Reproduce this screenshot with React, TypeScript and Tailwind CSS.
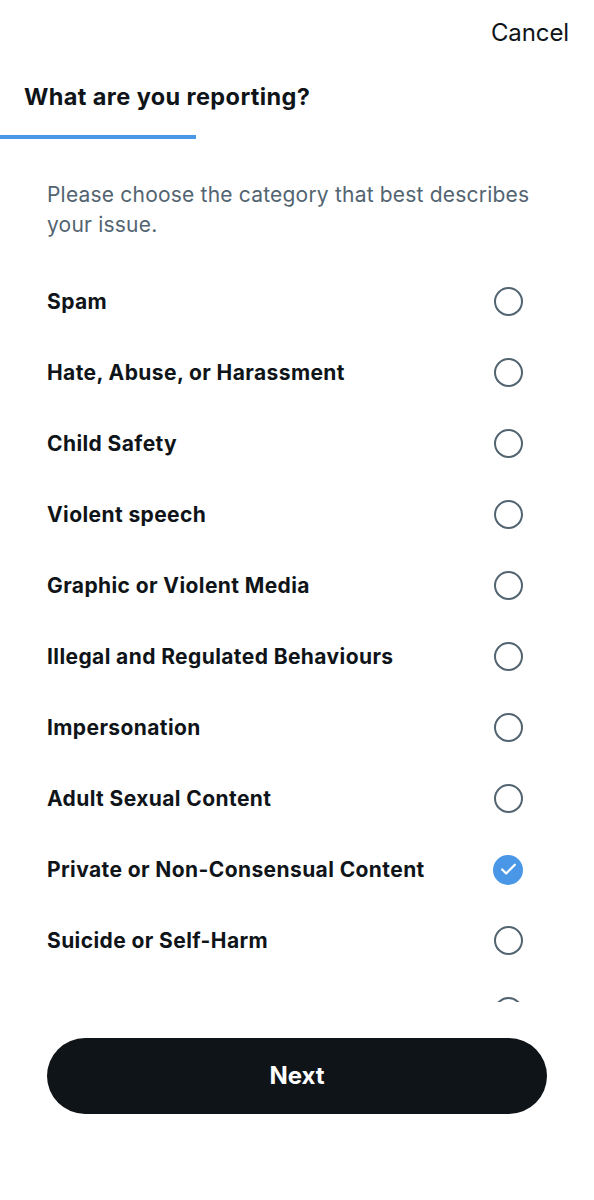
import { Check } from "lucide-react";

const options = [
  "Spam",
  "Hate, Abuse, or Harassment",
  "Child Safety",
  "Violent speech",
  "Graphic or Violent Media",
  "Illegal and Regulated Behaviours",
  "Impersonation",
  "Adult Sexual Content",
  "Private or Non-Consensual Content",
  "Suicide or Self-Harm",
  "Unsolicited Content and Interaction",
];

const selected = "Private or Non-Consensual Content";

function Radio({ checked }: { checked: boolean }) {
  if (checked) {
    return (
      <span className="flex h-[30px] w-[30px] items-center justify-center rounded-full bg-[#4a97e8]">
        <Check className="h-[19px] w-[19px] text-white" strokeWidth={2.8} />
      </span>
    );
  }
  return <span className="block h-[29px] w-[29px] rounded-full border-[2.5px] border-[#536471]" />;
}

export default function App() {
  return (
    <div
      className="flex h-[1200px] w-[594px] flex-col bg-white text-[#0f1419]"
      style={{ fontFamily: "Inter, 'Noto Sans', sans-serif" }}
    >
      {/* Top bar */}
      <div className="flex h-[66px] items-center justify-end pr-[25px]">
        <span className="text-[24px] tracking-[-0.1px]">Cancel</span>
      </div>

      <div className="flex h-[62px] items-center pl-6">
        <h1 className="text-[23.5px] font-bold tracking-[0.4px]">What are you reporting?</h1>
      </div>

      {/* Progress */}
      <div className="mt-[7px] h-1 w-[196px] bg-[#4a97e8]" />

      {/* Scrollable list */}
      <div className="h-[863px] overflow-hidden px-[47px] pt-[41px]">
        <p className="text-[21px] leading-[30px] tracking-[0.2px] text-[#536471]">
          Please choose the category that best describes your issue.
        </p>
        <ul className="mt-[26px]">
          {options.map((o) => (
            <li key={o} className="flex h-[71px] items-center justify-between">
              <span className="text-[21px] font-bold tracking-[0.4px]">{o}</span>
              <span className="mr-[24px]">
                <Radio checked={o === selected} />
              </span>
            </li>
          ))}
        </ul>
      </div>

      {/* Footer */}
      <div className="px-[47px] pt-[36px]">
        <button className="flex h-[76px] w-full items-center justify-center rounded-full bg-[#0f1419] text-[24px] font-bold text-white">
          Next
        </button>
      </div>
    </div>
  );
}
